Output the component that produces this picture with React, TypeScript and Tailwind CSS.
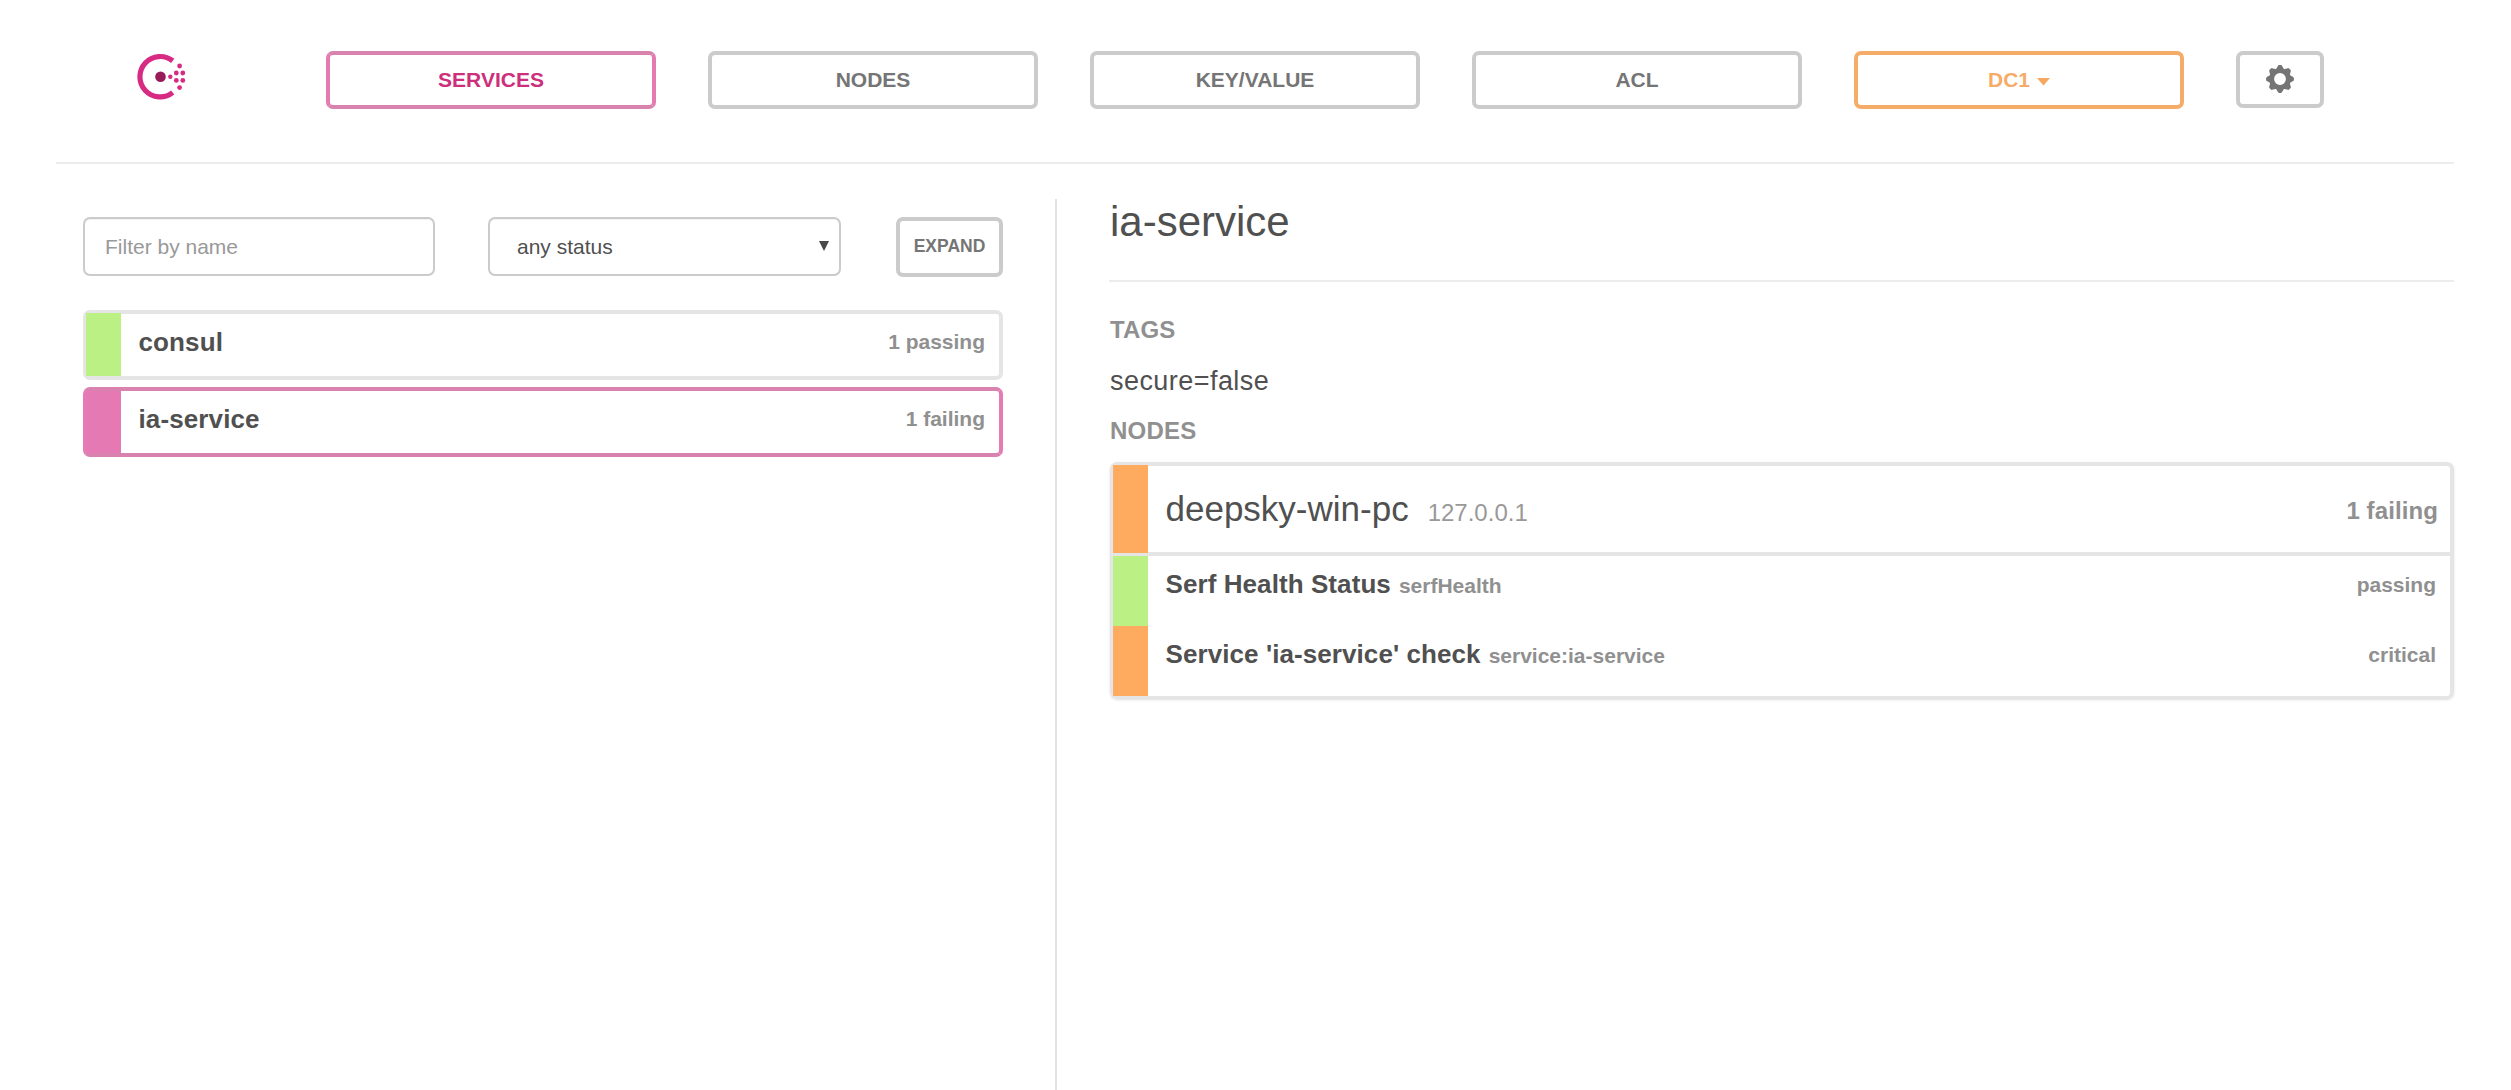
import React from "react";

const tabs = ["SERVICES", "NODES", "KEY/VALUE", "ACL"];

function Logo() {
  return (
    <svg width="50" height="50" viewBox="-0.5 0 50 50" fill="#d62a83" className="overflow-visible">
      <path d="M37.2 9.9A20.2 20.2 0 1 0 37.2 41.5" fill="none" stroke="#d62a83" strokeWidth="5.2" />
      <circle cx="25" cy="25.7" r="5.3" fill="#981c5a" />
      <circle cx="34.8" cy="25.7" r="2.2" />
      <circle cx="40.8" cy="22" r="2.4" />
      <circle cx="47.3" cy="22" r="2.4" />
      <circle cx="40.8" cy="29.4" r="2.4" />
      <circle cx="47.3" cy="29.4" r="2.4" />
      <circle cx="44.1" cy="15" r="2.4" />
      <circle cx="44.1" cy="36.6" r="2.4" />
    </svg>
  );
}

function Gear() {
  return (
    <svg width="28" height="28" viewBox="-14 -14 28 28" fill="#757575" className="-mt-0.5">
      <circle r="8.2" fill="none" stroke="#757575" strokeWidth="4.6" />
      {[0, 45, 90, 135, 180, 225, 270, 315].map((a) => (
        <path key={a} transform={`rotate(${a})`} d="M-4.8-8.6L-2.1-13.1Q-1.8-13.9-1-13.9H1Q1.8-13.9 2.1-13.1L4.8-8.6Z" />
      ))}
    </svg>
  );
}

function ServiceRow({ name, status, active }: { name: string; status: string; active?: boolean }) {
  return (
    <div
      className={
        "flex h-[70px] rounded-[7px] border-4 border-l-[3px] leading-[56px] font-bold " +
        (active ? "border-x-[#e57bb2] border-y-[#d981af]" : "border-[#e5e5e5]")
      }
    >
      <div className={active ? "w-[35px] bg-[#e579b3] -m-y-px" : "-mt-px h-[63px] w-[35px] bg-[#bbf085]"} />
      <div className="ml-[17.5px] grow text-[26px] tracking-[0.12px] text-[#505050]">{name}</div>
      <div className="mr-[14px] text-[21px] text-[#909090]">{status}</div>
    </div>
  );
}

function Check({ name, id, status, color }: { name: string; id: string; status: string; color: string }) {
  return (
    <div className="flex h-[70px] font-bold leading-[56px] text-[#909090]">
      <div className={"w-[35px] " + color} />
      <div className="ml-[17.5px] grow text-[21px]">
        <span className="text-[26px] tracking-[0.08px] text-[#505050]">{name}</span>
        <span className="ml-2">{id}</span>
      </div>
      <div className="mr-[14px] pt-px text-[21px]">{status}</div>
    </div>
  );
}

export default function App() {
  return (
    <div className="flex h-[1090px] w-[2511px] flex-col overflow-hidden bg-white font-['Liberation_Sans',Arial,sans-serif] whitespace-nowrap">
      <header className="mr-[57px] ml-14 flex h-[164px] shrink-0 items-start border-b-2 border-[#ececec] pt-[51px] pl-[79px] text-[21px] font-bold">
        <div className="mr-[141px] w-[50px]">
          <Logo />
        </div>
        <nav className="flex items-start gap-[52px]">
          {tabs.map((t, i) => (
            <button
              key={t}
              className={
                "h-[58px] w-[330px] rounded-[7px] border-4 " +
                (i === 0 ? "border-x-[#e47ab0] border-y-[#d882ae] text-[#cd2f7c]" : "border-[#cbcbcb] text-[#757575]")
              }
            >
              {t}
            </button>
          ))}
          <button className="flex h-[58px] w-[330px] items-center justify-center gap-[7px] rounded-[7px] border-4 border-[#f6ac69] text-[#f6ac69]">
            DC1
            <svg width="13" height="8" viewBox="0 0 13 8" className="mt-[3px]" fill="#f6a860">
              <path d="M0 0H13L6.5 7.5Z" />
            </svg>
          </button>
          <button className="flex h-[57px] w-[88px] items-center justify-center rounded-[7px] border-4 border-[#cbcbcb]">
            <Gear />
          </button>
        </nav>
      </header>

      <main className="mr-[57px] flex grow pt-[35px]">
        <section className="w-[1057px] shrink-0 border-r-2 border-[#e3e3e3] pt-[18px] pr-[52px] pl-[83px]">
          <div className="flex h-[60px] items-start text-[21px] text-[#505050]">
            <input
              className="h-[59px] w-[352px] rounded-[7px] border-2 border-[#cbcbcb] px-5 inset-shadow-2xs placeholder:text-[#999]"
              placeholder="Filter by name"
            />
            <div className="relative ml-[53px]">
              <select className="h-[59px] w-[353px] appearance-none rounded-[7px] border-2 border-[#cbcbcb] bg-transparent px-[27px] inset-shadow-2xs">
                <option>any status</option>
              </select>
              <svg width="10" height="10" viewBox="0 0 10 10" className="absolute top-6 right-3" fill="#484848">
                <path d="M0 0H10L5 10Z" />
              </svg>
            </div>
            <button className="ml-[55px] h-[60px] w-[107px] rounded-[7px] border-4 border-[#cbcbcb] px-0 pb-[2px] text-[17.5px] font-bold text-[#757575]">
              EXPAND
            </button>
          </div>
          <div className="mt-[33px] flex w-[920px] flex-col gap-[7px]">
            <ServiceRow name="consul" status="1 passing" />
            <ServiceRow name="ia-service" status="1 failing" active />
          </div>
        </section>

        <section className="ml-[52px] grow text-[#505050]">
          <h2 className="h-[83px] border-b-2 border-[#ececec] pl-px text-[42px] leading-[45px]">ia-service</h2>
          <h5 className="mt-[33px] h-[50px] pl-px text-[24px] leading-[30px] font-bold tracking-[0.15px] text-[#909090]">TAGS</h5>
          <p className="h-[51px] pl-px text-[27px] leading-[32px] tracking-[0.45px]">secure=false</p>
          <h5 className="h-[46px] pl-px text-[24px] leading-[30px] font-bold tracking-[0.25px] text-[#909090]">NODES</h5>
          <div className="ml-px rounded-[7px] border-4 border-b-[3px] border-l-[3px] border-[#e5e5e5] shadow-sm">
            <div className="flex h-[90px] border-b-4 border-[#e5e5e5] leading-[88px]">
              <div className="-mt-px h-[88px] w-[35px] bg-[#feab5f]" />
              <div className="-mt-px ml-[17.5px] grow text-[24px] text-[#999]">
                <span className="text-[35px] text-[#505050]">deepsky-win-pc</span>
                <span className="ml-[19px]">127.0.0.1</span>
              </div>
              <div className="mr-3 pt-px text-[24px] font-bold tracking-[0.1px] text-[#909090]">1 failing</div>
            </div>
            <Check name="Serf Health Status" id="serfHealth" status="passing" color="bg-[#bbf085]" />
            <Check name="Service 'ia-service' check" id="service:ia-service" status="critical" color="bg-[#feab5f]" />
          </div>
        </section>
      </main>
    </div>
  );
}
